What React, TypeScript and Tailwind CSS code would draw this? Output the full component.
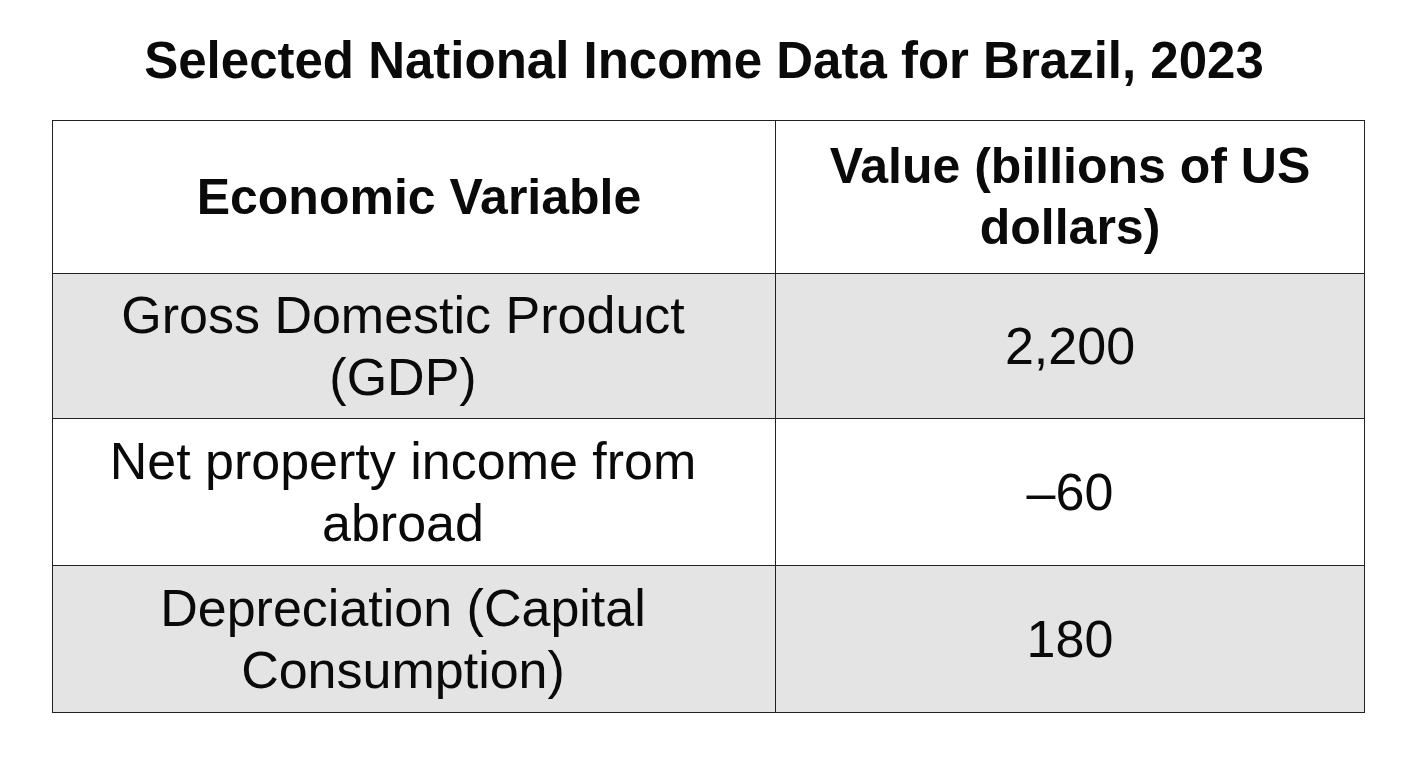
import React from "react";

const rows = [
  { label: ["Gross Domestic Product", "(GDP)"], value: "2,200", shade: true, h: "h-[145px]" },
  { label: ["Net property income from", "abroad"], value: "–60", shade: false, h: "h-[147px]" },
  { label: ["Depreciation (Capital", "Consumption)"], value: "180", shade: true, h: "h-[147px]" },
];

export default function App() {
  return (
    <div
      className="bg-white w-[1408px] h-[768px] text-[#0a0a0a]"
      style={{ fontFamily: '"Liberation Sans", Arial, sans-serif' }}
    >
      <h1 className="pt-[30px] text-center text-[51px] leading-[61px] font-bold">
        Selected National Income Data for Brazil, 2023
      </h1>
      <table className="mt-[29px] ml-[52px] w-[1312px] border-collapse table-fixed">
        <colgroup>
          <col className="w-[723px]" />
          <col className="w-[589px]" />
        </colgroup>
        <thead>
          <tr className="h-[153px]">
            <th className="border-[1.5px] border-[#222] text-center align-middle text-[50px] leading-[60px] font-bold pl-[10px]">
              Economic Variable
            </th>
            <th className="border-[1.5px] border-[#222] text-center align-middle text-[50px] leading-[61px] font-bold">
              Value (billions of US
              <br />
              dollars)
            </th>
          </tr>
        </thead>
        <tbody>
          {rows.map((r) => (
            <tr key={r.value} className={`${r.h} ${r.shade ? "bg-[#e4e4e4]" : "bg-white"}`}>
              <td className="border-[1.5px] border-[#222] text-center align-middle text-[52px] leading-[62px] pr-[22px]">
                {r.label[0]}
                <br />
                {r.label[1]}
              </td>
              <td className="border-[1.5px] border-[#222] text-center align-middle text-[52px] leading-[62px]">
                {r.value}
              </td>
            </tr>
          ))}
        </tbody>
      </table>
    </div>
  );
}
